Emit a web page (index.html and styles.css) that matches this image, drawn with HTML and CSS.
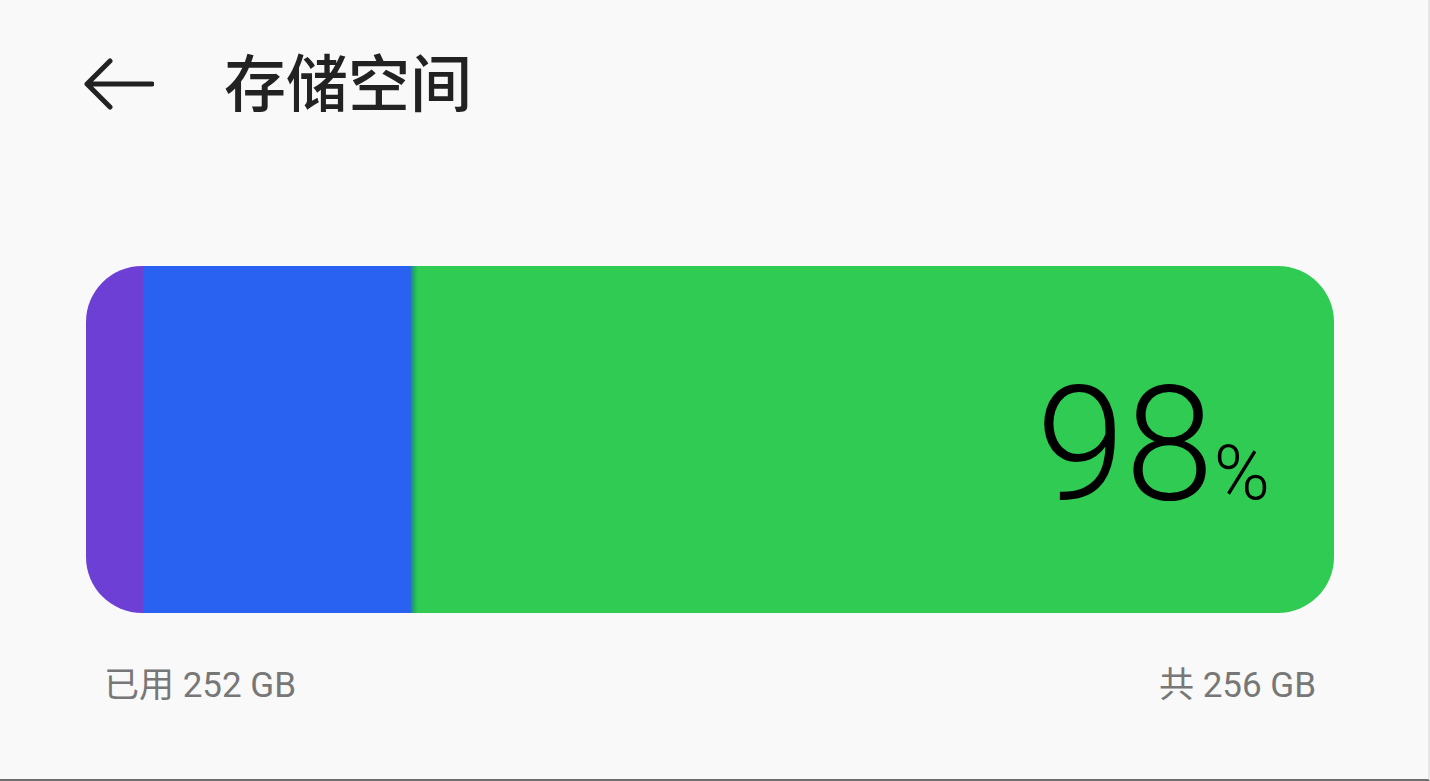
FILE: index.html
```html
<!DOCTYPE html>
<html lang="zh-CN">
<head>
    <meta charset="UTF-8">
    <meta name="viewport" content="width=device-width, initial-scale=1.0">
    <title>存储空间</title>
    <link rel="stylesheet" href="styles.css">
</head>
<body>

    <div class="screen">
        <!-- Header -->
        <header class="top-bar">
            <button class="back-btn" aria-label="返回">
                <svg width="72" height="54" viewBox="0 0 72 54">
                    <path d="M70 27 H6 M28 4 L5 27 L28 50" fill="none" stroke="#222" stroke-width="5" stroke-linecap="round" stroke-linejoin="round"/>
                </svg>
            </button>
            <h1>存储空间</h1>
        </header>

        <!-- Storage bar -->
        <section class="storage">
            <div class="storage-bar">
                <div class="seg seg-other" style="width: 57px"></div>
                <div class="seg seg-apps" style="width: 267px"></div>
                <div class="seg seg-edge"></div>
                <div class="seg seg-free">
                    <span class="percent">98<small>%</small></span>
                </div>
            </div>

            <div class="storage-info">
                <span>已用 252 GB</span>
                <span>共 256 GB</span>
            </div>
        </section>
    </div>

</body>
</html>
```

FILE: styles.css
```css
/* Global Styles */
* {
    margin: 0;
    padding: 0;
    box-sizing: border-box;
}

body {
    background: #f9f9f9;
    font-family: 'Roboto', 'Noto Sans CJK SC', sans-serif;
    color: #222;
}

.screen {
    height: 781px;
    border-right: 2px solid #e6e6e6;
    border-bottom: 2px solid #6e6e6e;
}

/* HEADER */
.top-bar {
    display: flex;
    align-items: center;
    height: 166px;
    padding: 0 0 0 82px;
}

.back-btn {
    display: flex;
    background: none;
    border: none;
    width: 72px;
    margin-right: 70px;
    margin-top: 2px;
    cursor: pointer;
}

.top-bar h1 {
    font-family: 'Noto Sans CJK SC', sans-serif;
    font-size: 62px;
    font-weight: 500;
    line-height: 1.2;
    margin-top: -6px;
    color: #222;
}

/* STORAGE BAR */
.storage {
    padding: 100px 94px 0 86px;
}

.storage-bar {
    display: flex;
    height: 347px;
    border-radius: 56px;
    overflow: hidden;
}

.seg {
    height: 100%;
    flex-shrink: 0;
}

.seg-other {
    background: #6d3fd5;
}

.seg-apps {
    background: #2961f1;
}

.seg-edge {
    width: 8px;
    background: linear-gradient(to right, #2961f1, #1fa860 40%, #2fcb52);
}

.seg-free {
    flex: 1;
    background: #2fcb52;
    display: flex;
    justify-content: flex-end;
    align-items: center;
    padding: 10px 64px 0 0;
}

.percent {
    font-family: 'Roboto', sans-serif;
    font-weight: 300;
    font-size: 160px;
    line-height: 1;
    color: #000;
}

.percent small {
    font-size: 76px;
}

/* INFO ROW */
.storage-info {
    display: flex;
    justify-content: space-between;
    padding: 52px 18px 0 18px;
    font-size: 35px;
    line-height: 1.2;
    color: #777;
}
```
